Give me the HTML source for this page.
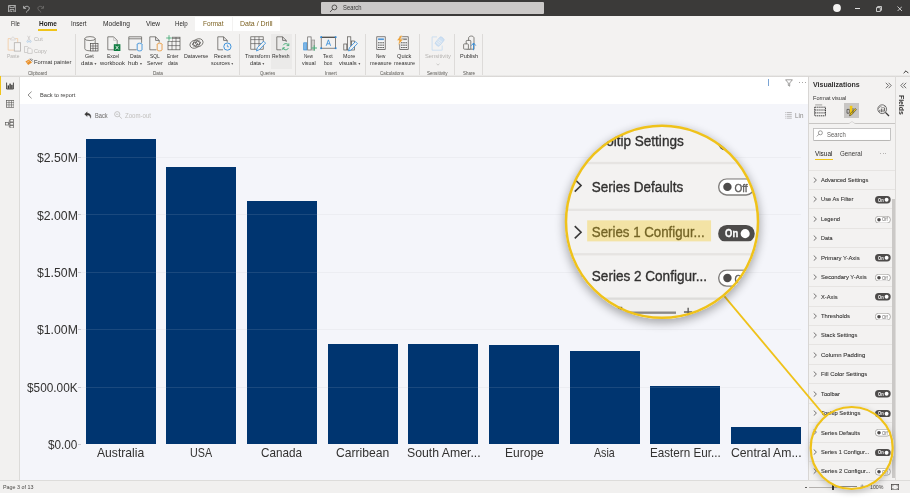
<!DOCTYPE html>
<html><head><meta charset="utf-8"><title>Power BI</title>
<style>
html,body{margin:0;padding:0;background:#fff;}
body{width:910px;height:502px;position:relative;overflow:hidden;font-family:"Liberation Sans", sans-serif;}
#root{position:absolute;left:0;top:0;width:910px;height:502px;overflow:hidden;will-change:transform;}
#root div,#root span,#root svg{box-sizing:border-box;}
.mag span{-webkit-text-stroke-width:0.15px !important;}
</style></head><body><div id="root">
<div style="position:absolute;left:0px;top:0px;width:910px;height:16px;background:#3b3a39;"></div>
<div style="position:absolute;left:0px;top:16px;width:910px;height:60px;background:#f3f2f1;"></div>
<div style="position:absolute;left:0px;top:74.6px;width:910px;height:2.3px;background:linear-gradient(#f2f1f0,#e6e5e3 35%,#d9d7d5 70%,#e2e1df);"></div>
<div style="position:absolute;left:0px;top:76.7px;width:20px;height:403.8px;background:#f2f1f0;"></div>
<div style="position:absolute;left:19.3px;top:76.0px;width:0.8px;height:404.5px;background:#dcdbd9;"></div>
<div style="position:absolute;left:20px;top:76.8px;width:788.5px;height:27.2px;background:#ffffff;"></div>
<div style="position:absolute;left:20px;top:104px;width:788.5px;height:376.5px;background:#f4f5fa;"></div>
<div style="position:absolute;left:0px;top:480.5px;width:910px;height:12.5px;background:#f1f0ef;"></div>
<div style="position:absolute;left:0px;top:480px;width:910px;height:0.8px;background:#dddcda;"></div>
<div style="position:absolute;left:321px;top:2px;width:222.6px;height:11.7px;background:#cbc9c8;border-radius:1px;"></div>
<span style="position:absolute;left:342.60px;top:4px;font-size:7.0px;line-height:8.4px;font-weight:400;color:#3b3a39;white-space:pre;transform:scaleX(0.8348);transform-origin:0 0;">Search</span>
<svg style="position:absolute;left:329px;top:4px;" width="9" height="9" viewBox="0 0 9 9" fill="none"><circle cx="5.4" cy="3.4" r="2.4" stroke="#3b3a39" stroke-width="0.8"/><path d="M3.7 5.2 L1 8" stroke="#3b3a39" stroke-width="0.8"/></svg>
<svg style="position:absolute;left:7.8px;top:4.5px;" width="8.2" height="7.8" viewBox="0 0 8.2 7.8" fill="none"><path d="M0.5 0.5 H7.7 V7.3 H0.5 Z" stroke="#c4c4c4" stroke-width="0.8"/><path d="M1.9 0.7 V2.6 H6.3 V0.7" stroke="#c4c4c4" stroke-width="0.8"/><path d="M2 7.2 V4.6 H6 V7.2 M3.6 5.8 V7.2" stroke="#c4c4c4" stroke-width="0.8"/></svg>
<svg style="position:absolute;left:22.5px;top:4.6px;" width="7.2" height="8" viewBox="0 0 7.2 8" fill="none"><path d="M0.7 0.9 V3.3 H3.1" stroke="#d4d4d4" stroke-width="0.8"/><path d="M0.9 3.1 C2.2 0.9 5.4 0.7 6.2 2.6 C6.8 4.2 5 5.6 3 7.5" stroke="#d4d4d4" stroke-width="0.8"/></svg>
<svg style="position:absolute;left:37px;top:4.6px;" width="7.2" height="8" viewBox="0 0 7.2 8" fill="none"><path d="M6.5 0.9 V3.3 H4.1" stroke="#737271" stroke-width="0.8"/><path d="M6.3 3.1 C5 0.9 1.8 0.7 1 2.6 C0.4 4.2 2.2 5.6 4.2 7.5" stroke="#737271" stroke-width="0.8"/></svg>
<svg style="position:absolute;left:832.6px;top:4.3px;" width="8" height="8" viewBox="0 0 8 8" fill="none"><circle cx="4" cy="4" r="3.9" fill="#f3f2f1"/></svg>
<div style="position:absolute;left:855.4px;top:8.3px;width:5px;height:0.7px;background:#e0e0e0;"></div>
<svg style="position:absolute;left:875.8px;top:5.5px;" width="6" height="6" viewBox="0 0 6 6" fill="none"><path d="M0.5 1.6 H4.3 V5.5 H0.5 Z M1.6 1.6 V0.5 H5.5 V4.3 H4.3" stroke="#e8e8e8" stroke-width="0.8"/></svg>
<svg style="position:absolute;left:896.9px;top:5.7px;" width="5.6" height="5.6" viewBox="0 0 5.6 5.6" fill="none"><path d="M0.5 0.5 L5.1 5.1 M5.1 0.5 L0.5 5.1" stroke="#ececec" stroke-width="0.8"/></svg>
<div style="position:absolute;left:195px;top:16.6px;width:37px;height:14.2px;background:#ffffff;"></div>
<div style="position:absolute;left:233px;top:16.6px;width:47px;height:14.2px;background:#ffffff;"></div>
<span style="position:absolute;left:10.90px;top:20px;font-size:6.5px;line-height:7.8px;font-weight:400;color:#2b2a29;white-space:pre;transform:scaleX(0.8455);transform-origin:0 0;">File</span>
<span style="position:absolute;left:38.60px;top:20px;font-size:6.5px;line-height:7.8px;font-weight:700;color:#252423;white-space:pre;transform:scaleX(0.9889);transform-origin:0 0;">Home</span>
<div style="position:absolute;left:38.4px;top:29.0px;width:18.2px;height:1.7px;background:#f0c419;"></div>
<span style="position:absolute;left:71.20px;top:20px;font-size:6.5px;line-height:7.8px;font-weight:400;color:#2b2a29;white-space:pre;transform:scaleX(0.9529);transform-origin:0 0;">Insert</span>
<span style="position:absolute;left:102.90px;top:20px;font-size:6.5px;line-height:7.8px;font-weight:400;color:#2b2a29;white-space:pre;transform:scaleX(1.0222);transform-origin:0 0;">Modeling</span>
<span style="position:absolute;left:145.60px;top:20px;font-size:6.5px;line-height:7.8px;font-weight:400;color:#2b2a29;white-space:pre;transform:scaleX(1.0071);transform-origin:0 0;">View</span>
<span style="position:absolute;left:174.60px;top:20px;font-size:6.5px;line-height:7.8px;font-weight:400;color:#2b2a29;white-space:pre;transform:scaleX(0.9429);transform-origin:0 0;">Help</span>
<span style="position:absolute;left:202.90px;top:20px;font-size:6.5px;line-height:7.8px;font-weight:400;color:#7a5f1e;white-space:pre;transform:scaleX(0.9952);transform-origin:0 0;">Format</span>
<span style="position:absolute;left:239.80px;top:20px;font-size:6.5px;line-height:7.8px;font-weight:400;color:#7a5f1e;white-space:pre;transform:scaleX(1.0710);transform-origin:0 0;">Data / Drill</span>
<span style="position:absolute;left:6.90px;top:53px;font-size:6.0px;line-height:7.2px;font-weight:400;color:#b5b3b1;white-space:pre;transform:scaleX(0.8063);transform-origin:0 0;">Paste</span>
<span style="position:absolute;left:33.80px;top:36px;font-size:6.0px;line-height:7.2px;font-weight:400;color:#b5b3b1;white-space:pre;transform:scaleX(0.9300);transform-origin:0 0;">Cut</span>
<span style="position:absolute;left:33.80px;top:48px;font-size:6.0px;line-height:7.2px;font-weight:400;color:#b5b3b1;white-space:pre;transform:scaleX(0.9143);transform-origin:0 0;">Copy</span>
<span style="position:absolute;left:33.80px;top:59px;font-size:6.0px;line-height:7.2px;font-weight:400;color:#323130;white-space:pre;transform:scaleX(0.9590);transform-origin:0 0;">Format painter</span>
<span style="position:absolute;left:28.00px;top:70px;font-size:5.2px;line-height:6.24px;font-weight:400;color:#55534f;white-space:pre;transform:scaleX(0.8522);transform-origin:0 0;">Clipboard</span>
<div style="position:absolute;left:75.45px;top:34px;width:0.9px;height:40.5px;background:#dddbd9;"></div>
<svg style="position:absolute;left:7px;top:35.5px;" width="15" height="17" viewBox="0 0 15 17" fill="none"><path d="M3.5 2.6 H1.15 V14.1 H7.3" stroke="#f2c9a0" stroke-width="0.8"/><path d="M8.3 2.6 H10.7 V6.7" stroke="#f2c9a0" stroke-width="0.8"/><path d="M3.6 4 V2.4 H4.7 C4.7 0.5 7.1 0.5 7.1 2.4 H8.2 V4 Z" stroke="#d2d0ce" stroke-width="0.7"/><rect x="7.3" y="6.7" width="6.3" height="8.4" stroke="#b3b0ad" stroke-width="0.8" fill="#f5f4f3"/></svg>
<svg style="position:absolute;left:25.5px;top:35px;" width="7" height="9" viewBox="0 0 7 9" fill="none"><path d="M1.55 0.8 L4.2 5.6 M3.95 0.8 L1.8 5.6" stroke="#c2c0be" stroke-width="0.6"/><circle cx="1.7" cy="6.5" r="0.85" stroke="#9dc3e6" stroke-width="0.6"/><circle cx="4.3" cy="6.5" r="0.85" stroke="#9dc3e6" stroke-width="0.6"/></svg>
<svg style="position:absolute;left:24px;top:46px;" width="9" height="9" viewBox="0 0 9 9" fill="none"><path d="M3.7 6.5 H0.5 V0.4 H3.3 L4.7 1.8 V2.2" stroke="#c2c0be" stroke-width="0.7"/><path d="M3.7 2.2 H6.6 L8.2 3.8 V7.4 H3.7 Z" stroke="#c2c0be" stroke-width="0.7" fill="#f5f4f3"/></svg>
<svg style="position:absolute;left:24.5px;top:57.5px;" width="9" height="9" viewBox="0 0 9 9" fill="none"><path d="M0.4 3.6 L4.2 1.2 L7 4.5 L3.2 7.1 Z" fill="#e8912d"/><path d="M1.6 4.6 L4.6 2.6" stroke="#fbe3c4" stroke-width="0.6"/><path d="M5 0.8 L7.6 3.4 M6.2 0.6 L6.9 1.3 M7.2 1 L7.6 1.5" stroke="#3b3a39" stroke-width="0.7"/></svg>
<span style="position:absolute;left:85.00px;top:53px;font-size:6.0px;line-height:7.2px;font-weight:400;color:#323130;white-space:pre;transform:scaleX(0.9000);transform-origin:0 0;">Get</span>
<span style="position:absolute;left:81.40px;top:60px;font-size:6.0px;line-height:7.2px;font-weight:400;color:#323130;white-space:pre;transform:scaleX(1.0125);transform-origin:0 0;">data<span style="font-size:3.4px;color:#605e5c;position:relative;top:-0.4px"> &#9660;</span></span>
<span style="position:absolute;left:106.55px;top:53px;font-size:6.0px;line-height:7.2px;font-weight:400;color:#323130;white-space:pre;transform:scaleX(0.8200);transform-origin:0 0;">Excel</span>
<span style="position:absolute;left:100.05px;top:60px;font-size:6.0px;line-height:7.2px;font-weight:400;color:#323130;white-space:pre;transform:scaleX(0.9731);transform-origin:0 0;">workbook</span>
<span style="position:absolute;left:129.85px;top:53px;font-size:6.0px;line-height:7.2px;font-weight:400;color:#323130;white-space:pre;transform:scaleX(0.8538);transform-origin:0 0;">Data</span>
<span style="position:absolute;left:128.20px;top:60px;font-size:6.0px;line-height:7.2px;font-weight:400;color:#323130;white-space:pre;transform:scaleX(1.0286);transform-origin:0 0;">hub<span style="font-size:3.4px;color:#605e5c;position:relative;top:-0.4px"> &#9660;</span></span>
<span style="position:absolute;left:149.95px;top:53px;font-size:6.0px;line-height:7.2px;font-weight:400;color:#323130;white-space:pre;transform:scaleX(0.8083);transform-origin:0 0;">SQL</span>
<span style="position:absolute;left:146.75px;top:60px;font-size:6.0px;line-height:7.2px;font-weight:400;color:#323130;white-space:pre;transform:scaleX(0.8944);transform-origin:0 0;">Server</span>
<span style="position:absolute;left:167.40px;top:53px;font-size:6.0px;line-height:7.2px;font-weight:400;color:#323130;white-space:pre;transform:scaleX(0.8000);transform-origin:0 0;">Enter</span>
<span style="position:absolute;left:168.40px;top:60px;font-size:6.0px;line-height:7.2px;font-weight:400;color:#323130;white-space:pre;transform:scaleX(0.8333);transform-origin:0 0;">data</span>
<span style="position:absolute;left:183.70px;top:53px;font-size:6.0px;line-height:7.2px;font-weight:400;color:#323130;white-space:pre;transform:scaleX(0.8857);transform-origin:0 0;">Dataverse</span>
<span style="position:absolute;left:214.20px;top:53px;font-size:6.0px;line-height:7.2px;font-weight:400;color:#323130;white-space:pre;transform:scaleX(0.8842);transform-origin:0 0;">Recent</span>
<span style="position:absolute;left:211.40px;top:60px;font-size:6.0px;line-height:7.2px;font-weight:400;color:#323130;white-space:pre;transform:scaleX(0.8960);transform-origin:0 0;">sources<span style="font-size:3.4px;color:#605e5c;position:relative;top:-0.4px"> &#9660;</span></span>
<span style="position:absolute;left:153.00px;top:70px;font-size:5.2px;line-height:6.24px;font-weight:400;color:#55534f;white-space:pre;transform:scaleX(0.9000);transform-origin:0 0;">Data</span>
<div style="position:absolute;left:238.85000000000002px;top:34px;width:0.9px;height:40.5px;background:#dddbd9;"></div>
<svg style="position:absolute;left:83.5px;top:35.5px;" width="15" height="16" viewBox="0 0 15 16" fill="none"><ellipse cx="6" cy="2.6" rx="5.2" ry="2" stroke="#55534f" stroke-width="0.7"/><path d="M0.8 2.6 V12.6 C0.8 14 3 14.8 6 14.8 M11.2 2.6 V7" stroke="#55534f" stroke-width="0.7"/><rect x="6.6" y="7.6" width="7.4" height="7.4" fill="#f3f2f1" stroke="#4a4846" stroke-width="0.7"/><path d="M6.6 10 H14 M6.6 12.4 H14 M9 7.6 V15 M11.6 7.6 V15" stroke="#4a4846" stroke-width="0.6"/></svg>
<svg style="position:absolute;left:107px;top:35.5px;" width="14" height="16" viewBox="0 0 14 16" fill="none"><path d="M0.8 0.8 H6.6 L10.2 4.4 V13.8 H0.8 Z" stroke="#55534f" stroke-width="0.7"/><path d="M6.6 0.8 V4.4 H10.2" stroke="#b8b6b4" stroke-width="0.7"/><rect x="6.8" y="8.2" width="6.6" height="6.8" fill="#107c41"/><path d="M8.6 9.8 L11.6 13.4 M11.6 9.8 L8.6 13.4" stroke="#fff" stroke-width="0.8"/></svg>
<svg style="position:absolute;left:128.3px;top:35.5px;" width="15" height="16" viewBox="0 0 15 16" fill="none"><path d="M8.6 13.8 H0.8 V0.8 H13.6 V6.8" stroke="#55534f" stroke-width="0.7"/><path d="M0.8 2.8 H13.6" stroke="#55534f" stroke-width="0.7"/><ellipse cx="11.6" cy="8.2" rx="2.4" ry="1" stroke="#2b88d8" stroke-width="0.8" fill="#f3f2f1"/><path d="M9.2 8.2 V14 C9.2 15.2 14 15.2 14 14 V8.2" stroke="#2b88d8" stroke-width="0.8" fill="#f3f2f1"/></svg>
<svg style="position:absolute;left:148.6px;top:35.5px;" width="14" height="16" viewBox="0 0 14 16" fill="none"><path d="M7.4 13.8 H0.8 V0.8 H6.6 L10.2 4.4 V6.6" stroke="#55534f" stroke-width="0.7"/><path d="M6.6 0.8 V4.4 H10.2" stroke="#4a4846" stroke-width="0.7"/><ellipse cx="10.6" cy="8.2" rx="2.4" ry="1" stroke="#e8912d" stroke-width="0.8" fill="#f3f2f1"/><path d="M8.2 8.2 V14 C8.2 15.2 13 15.2 13 14 V8.2" stroke="#e8912d" stroke-width="0.8" fill="#f3f2f1"/></svg>
<svg style="position:absolute;left:165.5px;top:34.8px;" width="15" height="17" viewBox="0 0 15 17" fill="none"><rect x="2" y="2.2" width="12" height="12.6" stroke="#55534f" stroke-width="0.7"/><path d="M2 3.4 H14 M2 6.4 H14 M2 10.6 H14 M6 2.2 V14.8 M10 2.2 V14.8" stroke="#4a4846" stroke-width="0.6"/><rect x="0" y="0" width="6" height="6" fill="#f3f2f1"/><path d="M3 0.2 V5.8 M0.2 3 H5.8" stroke="#35a56c" stroke-width="0.8"/></svg>
<svg style="position:absolute;left:188.8px;top:37px;" width="15" height="13" viewBox="0 0 15 13" fill="none"><g transform="rotate(-22 7.5 6.5)"><ellipse cx="5.6" cy="6.5" rx="4.9" ry="3.9" stroke="#55534f" stroke-width="0.7"/><ellipse cx="9.4" cy="6.5" rx="4.9" ry="3.9" stroke="#55534f" stroke-width="0.7"/><ellipse cx="5.9" cy="6.5" rx="2.5" ry="1.9" stroke="#4a4846" stroke-width="0.7"/><ellipse cx="9.1" cy="6.5" rx="2.5" ry="1.9" stroke="#4a4846" stroke-width="0.7"/></g></svg>
<svg style="position:absolute;left:216.5px;top:35.5px;" width="15" height="16" viewBox="0 0 15 16" fill="none"><path d="M6 13.8 H0.8 V0.8 H6.6 L10.2 4.4 V6.4" stroke="#55534f" stroke-width="0.7"/><path d="M6.6 0.8 V4.4 H10.2" stroke="#4a4846" stroke-width="0.7"/><circle cx="10.4" cy="10.6" r="3.6" stroke="#2b88d8" stroke-width="0.9" fill="#f3f2f1"/><path d="M10.4 8.6 V10.8 H12" stroke="#2b88d8" stroke-width="0.7"/></svg>
<div style="position:absolute;left:271px;top:34px;width:21px;height:34.5px;background:#ebeae9;"></div>
<span style="position:absolute;left:244.95px;top:53px;font-size:6.0px;line-height:7.2px;font-weight:400;color:#323130;white-space:pre;transform:scaleX(0.9296);transform-origin:0 0;">Transform</span>
<span style="position:absolute;left:250.00px;top:60px;font-size:6.0px;line-height:7.2px;font-weight:400;color:#323130;white-space:pre;transform:scaleX(0.9375);transform-origin:0 0;">data<span style="font-size:3.4px;color:#605e5c;position:relative;top:-0.4px"> &#9660;</span></span>
<span style="position:absolute;left:271.85px;top:53px;font-size:6.0px;line-height:7.2px;font-weight:400;color:#323130;white-space:pre;transform:scaleX(0.8318);transform-origin:0 0;">Refresh</span>
<span style="position:absolute;left:260.10px;top:70px;font-size:5.2px;line-height:6.24px;font-weight:400;color:#55534f;white-space:pre;transform:scaleX(0.8333);transform-origin:0 0;">Queries</span>
<div style="position:absolute;left:295.25px;top:34px;width:0.9px;height:40.5px;background:#dddbd9;"></div>
<svg style="position:absolute;left:249.8px;top:35.5px;" width="16" height="16" viewBox="0 0 16 16" fill="none"><rect x="0.8" y="0.8" width="12.4" height="12.4" stroke="#55534f" stroke-width="0.7"/><path d="M0.8 3.6 H13.2 M0.8 7.6 H13.2 M4.8 0.8 V13.2 M9 0.8 V13.2" stroke="#4a4846" stroke-width="0.6"/><path d="M6.5 15 L7.4 11.6 L13.6 5.2 L15.6 7.2 L9.4 13.6 Z" fill="#f3f2f1" stroke="#2b88d8" stroke-width="0.8"/></svg>
<svg style="position:absolute;left:275.8px;top:35.5px;" width="14" height="16" viewBox="0 0 14 16" fill="none"><path d="M5.4 13.8 H0.8 V0.8 H6.6 L10.2 4.4 V6" stroke="#55534f" stroke-width="0.7"/><path d="M6.6 0.8 V4.4 H10.2" stroke="#4a4846" stroke-width="0.7"/><path d="M12.6 9.4 C11.6 7.2 8.4 7 7.2 9.2 M7 12 C8 14.2 11.2 14.4 12.4 12.2" stroke="#35a56c" stroke-width="0.9"/><path d="M12.8 7.4 V9.6 H10.6 M6.8 14 V11.8 H9" stroke="#35a56c" stroke-width="0.8"/></svg>
<span style="position:absolute;left:304.40px;top:53px;font-size:6.0px;line-height:7.2px;font-weight:400;color:#323130;white-space:pre;transform:scaleX(0.7385);transform-origin:0 0;">New</span>
<span style="position:absolute;left:302.05px;top:60px;font-size:6.0px;line-height:7.2px;font-weight:400;color:#323130;white-space:pre;transform:scaleX(0.8938);transform-origin:0 0;">visual</span>
<span style="position:absolute;left:323.20px;top:53px;font-size:6.0px;line-height:7.2px;font-weight:400;color:#323130;white-space:pre;transform:scaleX(0.8727);transform-origin:0 0;">Text</span>
<span style="position:absolute;left:323.70px;top:60px;font-size:6.0px;line-height:7.2px;font-weight:400;color:#323130;white-space:pre;transform:scaleX(0.8600);transform-origin:0 0;">box</span>
<span style="position:absolute;left:343.25px;top:53px;font-size:6.0px;line-height:7.2px;font-weight:400;color:#323130;white-space:pre;transform:scaleX(0.8929);transform-origin:0 0;">More</span>
<span style="position:absolute;left:338.85px;top:60px;font-size:6.0px;line-height:7.2px;font-weight:400;color:#323130;white-space:pre;transform:scaleX(0.9682);transform-origin:0 0;">visuals<span style="font-size:3.4px;color:#605e5c;position:relative;top:-0.4px"> &#9660;</span></span>
<span style="position:absolute;left:324.50px;top:70px;font-size:5.2px;line-height:6.24px;font-weight:400;color:#55534f;white-space:pre;transform:scaleX(0.9077);transform-origin:0 0;">Insert</span>
<div style="position:absolute;left:364.85px;top:34px;width:0.9px;height:40.5px;background:#dddbd9;"></div>
<svg style="position:absolute;left:302.5px;top:35.5px;" width="15" height="16" viewBox="0 0 15 16" fill="none"><rect x="0.7" y="6.8" width="3.2" height="7.2" fill="#7db6e6" stroke="#2b88d8" stroke-width="0.6"/><rect x="4.7" y="0.9" width="3.4" height="13.1" stroke="#605e5c" stroke-width="0.7" fill="#f8f8f8"/><rect x="8.7" y="4" width="3" height="10" stroke="#8a8886" stroke-width="0.6" fill="#d2d0ce"/><path d="M11.2 9.2 V14.8 M8.4 12 H14" stroke="#4bb07a" stroke-width="1"/></svg>
<svg style="position:absolute;left:320px;top:36.2px;" width="17" height="14" viewBox="0 0 17 14" fill="none"><rect x="1.2" y="1.2" width="14.4" height="11" stroke="#55534f" stroke-width="0.7"/><path d="M1.2 1.3 H15.6" stroke="#4a4846" stroke-width="1.1"/><rect x="0.3" y="0.3" width="1.7" height="1.7" fill="#2b88d8"/><rect x="14.8" y="0.3" width="1.7" height="1.7" fill="#2b88d8"/><rect x="0.3" y="11.4" width="1.7" height="1.7" fill="#2b88d8"/><rect x="14.8" y="11.4" width="1.7" height="1.7" fill="#2b88d8"/><path d="M6.2 9.8 L8.4 3.8 L10.6 9.8 M7 7.8 H9.8" stroke="#2b88d8" stroke-width="0.8"/></svg>
<svg style="position:absolute;left:342.5px;top:35.5px;" width="16" height="16" viewBox="0 0 16 16" fill="none"><rect x="0.8" y="8" width="3" height="6" stroke="#55534f" stroke-width="0.7"/><rect x="4.6" y="0.8" width="3.2" height="13.2" stroke="#55534f" stroke-width="0.7"/><rect x="8.6" y="5" width="3" height="9" stroke="#55534f" stroke-width="0.7"/><path d="M5.6 15 L6.4 11.8 L12.4 5.6 L14.4 7.6 L8.4 13.8 Z" fill="#f3f2f1" stroke="#2b88d8" stroke-width="0.8"/></svg>
<span style="position:absolute;left:376.00px;top:53px;font-size:6.0px;line-height:7.2px;font-weight:400;color:#323130;white-space:pre;transform:scaleX(0.7692);transform-origin:0 0;">New</span>
<span style="position:absolute;left:369.95px;top:60px;font-size:6.0px;line-height:7.2px;font-weight:400;color:#323130;white-space:pre;transform:scaleX(0.9208);transform-origin:0 0;">measure</span>
<span style="position:absolute;left:397.20px;top:53px;font-size:6.0px;line-height:7.2px;font-weight:400;color:#323130;white-space:pre;transform:scaleX(0.9375);transform-origin:0 0;">Quick</span>
<span style="position:absolute;left:393.90px;top:60px;font-size:6.0px;line-height:7.2px;font-weight:400;color:#323130;white-space:pre;transform:scaleX(0.9000);transform-origin:0 0;">measure</span>
<span style="position:absolute;left:380.40px;top:70px;font-size:5.2px;line-height:6.24px;font-weight:400;color:#55534f;white-space:pre;transform:scaleX(0.8483);transform-origin:0 0;">Calculations</span>
<div style="position:absolute;left:419.35px;top:34px;width:0.9px;height:40.5px;background:#dddbd9;"></div>
<svg style="position:absolute;left:375.8px;top:35.8px;" width="11" height="15" viewBox="0 0 11 15" fill="none"><rect x="0.8" y="0.8" width="8.4" height="12.6" stroke="#4a4846" stroke-width="0.7" fill="#f8f8f8"/><rect x="2.1" y="2.4" width="5.8" height="1.7" fill="#4f94d4"/><rect x="2.2" y="6.2" width="1.3" height="1.1" fill="#3b3a39"/><rect x="4.35" y="6.2" width="1.3" height="1.1" fill="#3b3a39"/><rect x="6.5" y="6.2" width="1.3" height="1.1" fill="#3b3a39"/><rect x="2.2" y="8.6" width="1.3" height="1.1" fill="#3b3a39"/><rect x="4.35" y="8.6" width="1.3" height="1.1" fill="#3b3a39"/><rect x="6.5" y="8.6" width="1.3" height="1.1" fill="#3b3a39"/><rect x="2.2" y="11.0" width="1.3" height="1.1" fill="#3b3a39"/><rect x="4.35" y="11.0" width="1.3" height="1.1" fill="#3b3a39"/><rect x="6.5" y="11.0" width="1.3" height="1.1" fill="#3b3a39"/></svg>
<svg style="position:absolute;left:398.8px;top:35.8px;" width="11" height="15" viewBox="0 0 11 15" fill="none"><rect x="0.8" y="0.8" width="8.4" height="12.6" stroke="#4a4846" stroke-width="0.7" fill="#f8f8f8"/><rect x="2.1" y="2.4" width="5.8" height="1.7" fill="#8a8886"/><rect x="2.2" y="6.2" width="1.3" height="1.1" fill="#3b3a39"/><rect x="4.35" y="6.2" width="1.3" height="1.1" fill="#3b3a39"/><rect x="6.5" y="6.2" width="1.3" height="1.1" fill="#3b3a39"/><rect x="2.2" y="8.6" width="1.3" height="1.1" fill="#3b3a39"/><rect x="4.35" y="8.6" width="1.3" height="1.1" fill="#3b3a39"/><rect x="6.5" y="8.6" width="1.3" height="1.1" fill="#3b3a39"/><rect x="2.2" y="11.0" width="1.3" height="1.1" fill="#3b3a39"/><rect x="4.35" y="11.0" width="1.3" height="1.1" fill="#3b3a39"/><rect x="6.5" y="11.0" width="1.3" height="1.1" fill="#3b3a39"/></svg>
<svg style="position:absolute;left:395.6px;top:34.6px;" width="8" height="11" viewBox="0 0 8 11" fill="none"><path d="M4.6 0.4 L0.8 5.6 H3.2 L2 10.4 L7.2 4.2 H4.6 L6.4 0.4 Z" fill="#f0a030" stroke="#f3f2f1" stroke-width="0.5"/></svg>
<span style="position:absolute;left:424.75px;top:53px;font-size:6.0px;line-height:7.2px;font-weight:400;color:#b5b3b1;white-space:pre;transform:scaleX(0.9593);transform-origin:0 0;">Sensitivity</span>
<span style="position:absolute;left:426.65px;top:70px;font-size:5.2px;line-height:6.24px;font-weight:400;color:#55534f;white-space:pre;transform:scaleX(0.8792);transform-origin:0 0;">Sensitivity</span>
<svg style="position:absolute;left:435.8px;top:62.6px;" width="4" height="3" viewBox="0 0 4 3" fill="none"><path d="M0.6 0.6 L2 2.2 L3.4 0.6" stroke="#b5b3b1" stroke-width="0.6"/></svg>
<svg style="position:absolute;left:431px;top:35.5px;" width="15" height="16" viewBox="0 0 15 16" fill="none"><path d="M6 0.9 H1.1 V14.2 H11.2 V9.6" stroke="#c3daf0" stroke-width="0.8"/><g transform="rotate(40 8.6 5.6)"><rect x="6" y="0.8" width="5.2" height="9.4" rx="1.6" fill="#cfe1f3" stroke="#b4d0eb" stroke-width="0.6"/><path d="M6.4 4.6 H10.8 M6.4 6.4 H10.8 M6.4 8.2 H10.8" stroke="#f3f2f1" stroke-width="0.7"/></g></svg>
<div style="position:absolute;left:454.05px;top:34px;width:0.9px;height:40.5px;background:#dddbd9;"></div>
<span style="position:absolute;left:460.05px;top:53px;font-size:6.0px;line-height:7.2px;font-weight:400;color:#323130;white-space:pre;transform:scaleX(0.9250);transform-origin:0 0;">Publish</span>
<span style="position:absolute;left:463.00px;top:70px;font-size:5.2px;line-height:6.24px;font-weight:400;color:#55534f;white-space:pre;transform:scaleX(0.8571);transform-origin:0 0;">Share</span>
<div style="position:absolute;left:481.85px;top:34px;width:0.9px;height:40.5px;background:#dddbd9;"></div>
<svg style="position:absolute;left:462.8px;top:35.2px;" width="15" height="16" viewBox="0 0 15 16" fill="none"><path d="M5.6 14.2 V3 C5.6 0.4 11 0.4 11 3 V14.2 Z" stroke="#55534f" stroke-width="0.7" fill="#f3f2f1"/><rect x="3.2" y="5.4" width="4.6" height="8.8" rx="0.8" stroke="#55534f" stroke-width="0.7" fill="#f3f2f1"/><rect x="0.6" y="8.9" width="4.8" height="5.3" rx="0.8" stroke="#55534f" stroke-width="0.7" fill="#f3f2f1"/><path d="M10.6 15.2 V8.4 M8.4 10.6 L10.6 8 L12.8 10.6" stroke="#2b88d8" stroke-width="0.9"/></svg>
<svg style="position:absolute;left:903px;top:69.5px;" width="6" height="4" viewBox="0 0 6 4" fill="none"><path d="M0.6 3.2 L3 0.8 L5.4 3.2" stroke="#3b3a39" stroke-width="1"/></svg>
<div style="position:absolute;left:0px;top:75.7px;width:1.25px;height:18.9px;background:#f0c419;"></div>
<svg style="position:absolute;left:6.2px;top:82px;" width="8" height="8" viewBox="0 0 8 8" fill="none"><path d="M0.6 0.6 V7 H7.4 V0.6" stroke="#3b3a39" stroke-width="0.9"/><rect x="1.6" y="3.4" width="1.4" height="3.4" fill="#3b3a39"/><rect x="3.4" y="1.6" width="1.4" height="5.2" fill="#3b3a39"/><rect x="5.2" y="2.8" width="1.4" height="4" fill="#3b3a39"/></svg>
<svg style="position:absolute;left:5.6px;top:100.2px;" width="8.5" height="8" viewBox="0 0 8.5 8" fill="none"><rect x="0.5" y="0.5" width="7.5" height="6.8" stroke="#605e5c" stroke-width="0.7"/><path d="M0.5 2.6 H8 M0.5 4.9 H8 M3 0.5 V7.3 M5.5 0.5 V7.3" stroke="#605e5c" stroke-width="0.6"/></svg>
<svg style="position:absolute;left:5.2px;top:118.6px;" width="9" height="9.5" viewBox="0 0 9 9.5" fill="none"><rect x="0.5" y="3.4" width="3" height="2.6" stroke="#605e5c" stroke-width="0.7"/><rect x="5" y="0.5" width="3.4" height="2.4" stroke="#605e5c" stroke-width="0.7"/><rect x="5" y="3.6" width="3.4" height="2.4" stroke="#605e5c" stroke-width="0.7"/><rect x="5" y="6.6" width="3.4" height="2.4" stroke="#605e5c" stroke-width="0.7"/><path d="M3.5 4.7 H5 M4.2 1.7 H5 M4.2 7.8 H5 M4.2 1.7 V7.8" stroke="#605e5c" stroke-width="0.6"/></svg>
<svg style="position:absolute;left:26.9px;top:90.8px;" width="5.5" height="8" viewBox="0 0 5.5 8" fill="none"><path d="M4.6 0.6 L1 4 L4.6 7.4" stroke="#605e5c" stroke-width="0.7"/></svg>
<span style="position:absolute;left:39.60px;top:92px;font-size:6.0px;line-height:7.2px;font-weight:400;color:#3b3a39;white-space:pre;transform:scaleX(0.9447);transform-origin:0 0;">Back to report</span>
<div style="position:absolute;left:767.9px;top:78.6px;width:0.6px;height:1.0px;background:#7ba4d4;"></div>
<div style="position:absolute;left:767.9px;top:80.3px;width:0.6px;height:5.5px;background:#7ba4d4;"></div>
<svg style="position:absolute;left:785px;top:78.5px;" width="8" height="8" viewBox="0 0 8 8" fill="none"><path d="M0.6 0.8 H7.4 L4.7 4 V7.2 L3.3 6.4 V4 Z" stroke="#605e5c" stroke-width="0.6"/></svg>
<div style="position:absolute;left:799.4px;top:81.6px;width:1.1px;height:1.1px;background:#8a8886;border-radius:50%"></div>
<div style="position:absolute;left:802.2px;top:81.6px;width:1.1px;height:1.1px;background:#8a8886;border-radius:50%"></div>
<div style="position:absolute;left:805.0px;top:81.6px;width:1.1px;height:1.1px;background:#8a8886;border-radius:50%"></div>
<svg style="position:absolute;left:84px;top:111.4px;" width="8" height="8" viewBox="0 0 7.5 7.5" fill="none"><path d="M3 0.8 L0.6 3 L3 5.2 V3.8 C4.6 3.6 5.8 4.6 6.2 6.8 C7 3.8 5.6 2.2 3 2.2 Z" fill="#3b3a39" stroke="#3b3a39" stroke-width="0.3"/></svg>
<span style="position:absolute;left:94.60px;top:112px;font-size:6.9px;line-height:8.28px;font-weight:400;color:#6b6967;white-space:pre;transform:scaleX(0.8250);transform-origin:0 0;">Back</span>
<svg style="position:absolute;left:114.2px;top:111.4px;" width="8.5" height="8" viewBox="0 0 8.5 8" fill="none"><circle cx="3.2" cy="3.2" r="2.6" stroke="#b5b3b1" stroke-width="0.7"/><path d="M5.2 5.2 L7.8 7.6 M2 3.2 H4.4" stroke="#b5b3b1" stroke-width="0.7"/></svg>
<span style="position:absolute;left:125.30px;top:112px;font-size:6.9px;line-height:8.28px;font-weight:400;color:#c2c0be;white-space:pre;transform:scaleX(0.8800);transform-origin:0 0;">Zoom-out</span>
<svg style="position:absolute;left:785px;top:111.8px;" width="7" height="7.6" viewBox="0 0 7 7.6" fill="none"><path d="M1.6 0.6 H6.8 M1.6 2.7 H6.8 M1.6 4.8 H6.8 M1.6 6.9 H6.8" stroke="#8a8886" stroke-width="0.6"/><path d="M0.3 0.6 H1 M0.3 2.7 H1 M0.3 4.8 H1 M0.3 6.9 H1" stroke="#8a8886" stroke-width="0.6"/></svg>
<span style="position:absolute;left:794.80px;top:112px;font-size:6.9px;line-height:8.28px;font-weight:400;color:#8a8886;white-space:pre;transform:scaleX(0.9111);transform-origin:0 0;">Lin</span>
<div style="position:absolute;left:80px;top:157.0px;width:721px;height:0.6px;background:#eaebf1;"></div>
<div style="position:absolute;left:80px;top:214.39999999999998px;width:721px;height:0.6px;background:#eaebf1;"></div>
<div style="position:absolute;left:80px;top:271.8px;width:721px;height:0.6px;background:#eaebf1;"></div>
<div style="position:absolute;left:80px;top:329.09999999999997px;width:721px;height:0.6px;background:#eaebf1;"></div>
<div style="position:absolute;left:80px;top:386.5px;width:721px;height:0.6px;background:#eaebf1;"></div>
<div style="position:absolute;left:85.8px;top:138.8px;width:70px;height:305.2px;background:#003570;"></div>
<div style="position:absolute;left:166.4px;top:166.7px;width:70px;height:277.3px;background:#003570;"></div>
<div style="position:absolute;left:247.1px;top:201.2px;width:70px;height:242.8px;background:#003570;"></div>
<div style="position:absolute;left:327.6px;top:343.7px;width:70px;height:100.30000000000001px;background:#003570;"></div>
<div style="position:absolute;left:408.3px;top:343.7px;width:70px;height:100.30000000000001px;background:#003570;"></div>
<div style="position:absolute;left:489.1px;top:345.3px;width:70px;height:98.69999999999999px;background:#003570;"></div>
<div style="position:absolute;left:569.9px;top:350.7px;width:70px;height:93.30000000000001px;background:#003570;"></div>
<div style="position:absolute;left:650.2px;top:386.2px;width:70px;height:57.80000000000001px;background:#003570;"></div>
<div style="position:absolute;left:730.9px;top:426.6px;width:70px;height:17.399999999999977px;background:#003570;"></div>
<div style="position:absolute;left:80px;top:157.0px;width:721px;height:0.6px;background:rgba(255,255,255,0.10);"></div>
<div style="position:absolute;left:80px;top:214.39999999999998px;width:721px;height:0.6px;background:rgba(255,255,255,0.10);"></div>
<div style="position:absolute;left:80px;top:271.8px;width:721px;height:0.6px;background:rgba(255,255,255,0.10);"></div>
<div style="position:absolute;left:80px;top:329.09999999999997px;width:721px;height:0.6px;background:rgba(255,255,255,0.10);"></div>
<div style="position:absolute;left:80px;top:386.5px;width:721px;height:0.6px;background:rgba(255,255,255,0.10);"></div>
<span style="position:absolute;left:36.90px;top:151px;font-size:12.4px;line-height:14.88px;font-weight:400;color:#323130;white-space:pre;transform:scaleX(0.9878);transform-origin:0 0;">$2.50M</span>
<div style="position:absolute;left:78px;top:157.0px;width:2.5px;height:0.6px;background:#c8c8d0;"></div>
<span style="position:absolute;left:36.90px;top:209px;font-size:12.4px;line-height:14.88px;font-weight:400;color:#323130;white-space:pre;transform:scaleX(0.9878);transform-origin:0 0;">$2.00M</span>
<div style="position:absolute;left:78px;top:214.39999999999998px;width:2.5px;height:0.6px;background:#c8c8d0;"></div>
<span style="position:absolute;left:36.90px;top:266px;font-size:12.4px;line-height:14.88px;font-weight:400;color:#323130;white-space:pre;transform:scaleX(0.9878);transform-origin:0 0;">$1.50M</span>
<div style="position:absolute;left:78px;top:271.8px;width:2.5px;height:0.6px;background:#c8c8d0;"></div>
<span style="position:absolute;left:36.90px;top:323px;font-size:12.4px;line-height:14.88px;font-weight:400;color:#323130;white-space:pre;transform:scaleX(0.9878);transform-origin:0 0;">$1.00M</span>
<div style="position:absolute;left:78px;top:329.09999999999997px;width:2.5px;height:0.6px;background:#c8c8d0;"></div>
<span style="position:absolute;left:26.80px;top:381px;font-size:12.4px;line-height:14.88px;font-weight:400;color:#323130;white-space:pre;transform:scaleX(0.9547);transform-origin:0 0;">$500.00K</span>
<div style="position:absolute;left:78px;top:386.5px;width:2.5px;height:0.6px;background:#c8c8d0;"></div>
<span style="position:absolute;left:48.00px;top:438px;font-size:12.4px;line-height:14.88px;font-weight:400;color:#323130;white-space:pre;transform:scaleX(0.9484);transform-origin:0 0;">$0.00</span>
<div style="position:absolute;left:78px;top:444.0px;width:2.5px;height:0.6px;background:#c8c8d0;"></div>
<span style="position:absolute;left:97.00px;top:446px;font-size:12.4px;line-height:14.88px;font-weight:400;color:#323130;white-space:pre;transform:scaleX(0.9796);transform-origin:0 0;">Australia</span>
<span style="position:absolute;left:190.15px;top:446px;font-size:12.4px;line-height:14.88px;font-weight:400;color:#323130;white-space:pre;transform:scaleX(0.8654);transform-origin:0 0;">USA</span>
<span style="position:absolute;left:261.25px;top:446px;font-size:12.4px;line-height:14.88px;font-weight:400;color:#323130;white-space:pre;transform:scaleX(0.9432);transform-origin:0 0;">Canada</span>
<span style="position:absolute;left:336.20px;top:446px;font-size:12.4px;line-height:14.88px;font-weight:400;color:#323130;white-space:pre;transform:scaleX(0.9782);transform-origin:0 0;">Carribean</span>
<span style="position:absolute;left:407.15px;top:446px;font-size:12.4px;line-height:14.88px;font-weight:400;color:#323130;white-space:pre;transform:scaleX(0.9905);transform-origin:0 0;">South Amer...</span>
<span style="position:absolute;left:504.70px;top:446px;font-size:12.4px;line-height:14.88px;font-weight:400;color:#323130;white-space:pre;transform:scaleX(0.9700);transform-origin:0 0;">Europe</span>
<span style="position:absolute;left:593.85px;top:446px;font-size:12.4px;line-height:14.88px;font-weight:400;color:#323130;white-space:pre;transform:scaleX(0.8600);transform-origin:0 0;">Asia</span>
<span style="position:absolute;left:650.30px;top:446px;font-size:12.4px;line-height:14.88px;font-weight:400;color:#323130;white-space:pre;transform:scaleX(0.9413);transform-origin:0 0;">Eastern Eur...</span>
<span style="position:absolute;left:730.50px;top:446px;font-size:12.4px;line-height:14.88px;font-weight:400;color:#323130;white-space:pre;transform:scaleX(0.9859);transform-origin:0 0;">Central Am...</span>
<span style="position:absolute;left:2.60px;top:484px;font-size:5.3px;line-height:6.36px;font-weight:400;color:#4a4846;white-space:pre;transform:scaleX(1.0133);transform-origin:0 0;">Page 3 of 13</span>
<div style="position:absolute;left:804.8px;top:486.6px;width:1.8px;height:0.6px;background:#605e5c;"></div>
<div style="position:absolute;left:809px;top:486.6px;width:48px;height:0.6px;background:#b3b0ad;"></div>
<div style="position:absolute;left:832.3px;top:484.2px;width:1.4px;height:5.4px;background:#3b3a39;"></div>
<svg style="position:absolute;left:859.5px;top:484.5px;" width="4.5" height="4.5" viewBox="0 0 4.5 4.5" fill="none"><path d="M2.2 0.4 V4 M0.4 2.2 H4" stroke="#605e5c" stroke-width="0.6"/></svg>
<span style="position:absolute;left:870.20px;top:484px;font-size:5.9px;line-height:7.08px;font-weight:400;color:#4a4846;white-space:pre;transform:scaleX(0.8933);transform-origin:0 0;">100%</span>
<svg style="position:absolute;left:890.8px;top:483.6px;" width="8.2" height="6.4" viewBox="0 0 8.2 6.4" fill="none"><rect x="0.5" y="0.5" width="7.2" height="5.4" stroke="#4a4846" stroke-width="0.8"/><path d="M1.6 2.4 V1.6 H2.6 M5.6 1.6 H6.6 V2.4 M6.6 4 V4.8 H5.6 M2.6 4.8 H1.6 V4" stroke="#4a4846" stroke-width="0.5"/></svg>
<div style="position:absolute;left:808.5px;top:76.8px;width:101.5px;height:403.7px;background:#f3f2f1;"></div>
<div style="position:absolute;left:808.3px;top:76.3px;width:0.7px;height:404.2px;background:#d8d6d4;"></div>
<div style="position:absolute;left:894.6px;top:76.3px;width:0.7px;height:404.2px;background:#dddbd9;"></div>
<span style="position:absolute;left:813.00px;top:80px;font-size:7.7px;line-height:9.24px;font-weight:700;color:#323130;white-space:pre;transform:scaleX(0.9137);transform-origin:0 0;">Visualizations</span>
<svg style="position:absolute;left:884.5px;top:81.5px;" width="7" height="7" viewBox="0 0 7 7" fill="none"><path d="M0.8 0.8 L3.4 3.5 L0.8 6.2 M3.6 0.8 L6.2 3.5 L3.6 6.2" stroke="#3b3a39" stroke-width="0.7"/></svg>
<svg style="position:absolute;left:899.5px;top:81.5px;" width="7" height="7" viewBox="0 0 7 7" fill="none"><path d="M3.4 0.8 L0.8 3.5 L3.4 6.2 M6.2 0.8 L3.6 3.5 L6.2 6.2" stroke="#3b3a39" stroke-width="0.7"/></svg>
<span style="position:absolute;left:906.2px;top:94.8px;font-size:7.6px;line-height:9px;font-weight:700;color:#323130;white-space:pre;transform-origin:0 0;transform:rotate(90deg) scaleX(0.9);">Fields</span>
<span style="position:absolute;left:813.00px;top:94px;font-size:6.2px;line-height:7.44px;font-weight:400;color:#323130;white-space:pre;transform:scaleX(0.8947);transform-origin:0 0;">Format visual</span>
<svg style="position:absolute;left:814px;top:104px;" width="12.5" height="13" viewBox="0 0 12.5 13" fill="none"><path d="M1.2 0.9 H8.2" stroke="#a8a6a4" stroke-width="1.1"/><rect x="0.7" y="3.2" width="10.8" height="8.6" stroke="#252423" stroke-width="0.85" stroke-dasharray="1.3 0.6"/><path d="M0.7 6 H11.5 M0.7 8.9 H11.5" stroke="#252423" stroke-width="0.85" stroke-dasharray="1.3 0.6"/></svg>
<div style="position:absolute;left:844px;top:103.2px;width:15px;height:14.6px;background:#c8c6c4;"></div>
<svg style="position:absolute;left:846.4px;top:104.6px;" width="11" height="12" viewBox="0 0 11 12" fill="none"><path d="M1 4.4 H3.4 V8.2 H1 Z" stroke="#3b3a39" stroke-width="0.7"/><rect x="3.8" y="0.8" width="2.6" height="8.4" fill="#f2c811"/><path d="M9.2 3.4 L10.4 4.6 L5.2 10.2 L3.4 10.8 L4 9 Z" fill="#f2c811" stroke="#3b3a39" stroke-width="0.6"/><path d="M7 3 V8.2" stroke="#3b3a39" stroke-width="0.6"/></svg>
<svg style="position:absolute;left:877px;top:104px;" width="13" height="13" viewBox="0 0 13 13" fill="none"><circle cx="5.2" cy="5.2" r="4.4" stroke="#3b3a39" stroke-width="0.7"/><path d="M8.4 8.4 L12 12" stroke="#3b3a39" stroke-width="1.3"/><path d="M2.8 5.8 V7.8 M4.4 4.6 V8.2 M6 5.4 V8.2 M7.6 4 V7.4" stroke="#3b3a39" stroke-width="0.8"/><path d="M1.2 4.6 L3.6 2.6 L6 4 L8.6 2.2" stroke="#3b3a39" stroke-width="0.5"/></svg>
<div style="position:absolute;left:808.8px;top:123.2px;width:86px;height:0.6px;background:#c8c6c4;"></div>
<svg style="position:absolute;left:847.5px;top:120.6px;" width="8" height="3.4" viewBox="0 0 8 3.4" fill="none"><path d="M0.4 3 L4 0.5 L7.6 3" fill="#f3f2f1" stroke="#c8c6c4" stroke-width="0.6"/></svg>
<svg style="position:absolute;left:813px;top:128.2px;" width="78" height="12.9" viewBox="0 0 78 12.9" fill="none"><rect x="0.3" y="0.3" width="77.4" height="12.2" rx="0.8" fill="#ffffff" stroke="#8a8886" stroke-width="0.6"/></svg>
<svg style="position:absolute;left:816px;top:130.4px;" width="7" height="7" viewBox="0 0 7 7" fill="none"><circle cx="4.4" cy="2.8" r="2" stroke="#605e5c" stroke-width="0.6"/><path d="M3 4.2 L0.8 6.4" stroke="#605e5c" stroke-width="0.6"/></svg>
<span style="position:absolute;left:826.60px;top:131px;font-size:6.4px;line-height:7.68px;font-weight:400;color:#605e5c;white-space:pre;transform:scaleX(0.9286);transform-origin:0 0;">Search</span>
<span style="position:absolute;left:815.00px;top:150px;font-size:6.6px;line-height:7.92px;font-weight:400;color:#252423;white-space:pre;transform:scaleX(0.9778);transform-origin:0 0;">Visual</span>
<div style="position:absolute;left:815px;top:158.6px;width:17.8px;height:1.0px;background:#f0c419;"></div>
<span style="position:absolute;left:840.00px;top:150px;font-size:6.6px;line-height:7.92px;font-weight:400;color:#3b3a39;white-space:pre;transform:scaleX(0.9417);transform-origin:0 0;">General</span>
<div style="position:absolute;left:879.8px;top:152.6px;width:1.1px;height:1.1px;background:#a19f9d;border-radius:50%"></div>
<div style="position:absolute;left:882.6px;top:152.6px;width:1.1px;height:1.1px;background:#a19f9d;border-radius:50%"></div>
<div style="position:absolute;left:885.4px;top:152.6px;width:1.1px;height:1.1px;background:#a19f9d;border-radius:50%"></div>
<div style="position:absolute;left:808.8px;top:169.6px;width:86px;height:0.5px;background:#e6e4e2;"></div>
<svg style="position:absolute;left:813.3px;top:176.8px;" width="4.2" height="6.4" viewBox="0 0 4.2 6.4" fill="none"><path d="M0.7 0.5 L3.4 3.1 L0.7 5.7" stroke="#3b3a39" stroke-width="0.7"/></svg>
<span style="position:absolute;left:820.50px;top:176px;font-size:6.2px;line-height:7.44px;font-weight:400;color:#323130;white-space:pre;transform:scaleX(0.9151);transform-origin:0 0;-webkit-text-stroke:0.09px #323130;">Advanced Settings</span>
<div style="position:absolute;left:808.8px;top:189.03px;width:86px;height:0.5px;background:#e6e4e2;"></div>
<svg style="position:absolute;left:813.3px;top:196.23000000000002px;" width="4.2" height="6.4" viewBox="0 0 4.2 6.4" fill="none"><path d="M0.7 0.5 L3.4 3.1 L0.7 5.7" stroke="#3b3a39" stroke-width="0.7"/></svg>
<span style="position:absolute;left:820.50px;top:195px;font-size:6.2px;line-height:7.44px;font-weight:400;color:#323130;white-space:pre;transform:scaleX(0.9241);transform-origin:0 0;-webkit-text-stroke:0.09px #323130;">Use As Filter</span>
<svg style="position:absolute;left:875.2px;top:196.13000000000002px;" width="15.7" height="7.4" viewBox="0 0 15.7 7.4" fill="none"><rect x="0" y="0" width="15.7" height="7.4" rx="3.7" fill="#4d4b4a"/><circle cx="11.6" cy="3.7" r="1.95" fill="#ffffff"/></svg>
<span style="position:absolute;left:877.80px;top:198px;font-size:4.7px;line-height:5.64px;font-weight:700;color:#ffffff;white-space:pre;transform:scaleX(0.8571);transform-origin:0 0;">On</span>
<div style="position:absolute;left:808.8px;top:208.45999999999998px;width:86px;height:0.5px;background:#e6e4e2;"></div>
<svg style="position:absolute;left:813.3px;top:215.66px;" width="4.2" height="6.4" viewBox="0 0 4.2 6.4" fill="none"><path d="M0.7 0.5 L3.4 3.1 L0.7 5.7" stroke="#3b3a39" stroke-width="0.7"/></svg>
<span style="position:absolute;left:820.50px;top:215px;font-size:6.2px;line-height:7.44px;font-weight:400;color:#323130;white-space:pre;transform:scaleX(0.9221);transform-origin:0 0;-webkit-text-stroke:0.09px #323130;">Legend</span>
<svg style="position:absolute;left:875.2px;top:215.56px;" width="15.7" height="7.4" viewBox="0 0 15.7 7.4" fill="none"><rect x="0.25" y="0.25" width="15.2" height="6.9" rx="3.45" fill="#ffffff" stroke="#7f7d7b" stroke-width="0.6"/><circle cx="4.0" cy="3.7" r="1.8" fill="#4d4b4a"/></svg>
<span style="position:absolute;left:882.10px;top:217px;font-size:4.7px;line-height:5.64px;font-weight:400;color:#605e5c;white-space:pre;transform:scaleX(0.9143);transform-origin:0 0;">Off</span>
<div style="position:absolute;left:808.8px;top:227.89px;width:86px;height:0.5px;background:#e6e4e2;"></div>
<svg style="position:absolute;left:813.3px;top:235.09px;" width="4.2" height="6.4" viewBox="0 0 4.2 6.4" fill="none"><path d="M0.7 0.5 L3.4 3.1 L0.7 5.7" stroke="#3b3a39" stroke-width="0.7"/></svg>
<span style="position:absolute;left:820.50px;top:234px;font-size:6.2px;line-height:7.44px;font-weight:400;color:#323130;white-space:pre;transform:scaleX(0.8755);transform-origin:0 0;-webkit-text-stroke:0.09px #323130;">Data</span>
<div style="position:absolute;left:808.8px;top:247.32px;width:86px;height:0.5px;background:#e6e4e2;"></div>
<svg style="position:absolute;left:813.3px;top:254.52px;" width="4.2" height="6.4" viewBox="0 0 4.2 6.4" fill="none"><path d="M0.7 0.5 L3.4 3.1 L0.7 5.7" stroke="#3b3a39" stroke-width="0.7"/></svg>
<span style="position:absolute;left:820.50px;top:254px;font-size:6.2px;line-height:7.44px;font-weight:400;color:#323130;white-space:pre;transform:scaleX(0.9597);transform-origin:0 0;-webkit-text-stroke:0.09px #323130;">Primary Y-Axis</span>
<svg style="position:absolute;left:875.2px;top:254.42000000000002px;" width="15.7" height="7.4" viewBox="0 0 15.7 7.4" fill="none"><rect x="0" y="0" width="15.7" height="7.4" rx="3.7" fill="#4d4b4a"/><circle cx="11.6" cy="3.7" r="1.95" fill="#ffffff"/></svg>
<span style="position:absolute;left:877.80px;top:256px;font-size:4.7px;line-height:5.64px;font-weight:700;color:#ffffff;white-space:pre;transform:scaleX(0.8571);transform-origin:0 0;">On</span>
<div style="position:absolute;left:808.8px;top:266.75px;width:86px;height:0.5px;background:#e6e4e2;"></div>
<svg style="position:absolute;left:813.3px;top:273.95px;" width="4.2" height="6.4" viewBox="0 0 4.2 6.4" fill="none"><path d="M0.7 0.5 L3.4 3.1 L0.7 5.7" stroke="#3b3a39" stroke-width="0.7"/></svg>
<span style="position:absolute;left:820.50px;top:273px;font-size:6.2px;line-height:7.44px;font-weight:400;color:#323130;white-space:pre;transform:scaleX(0.9417);transform-origin:0 0;-webkit-text-stroke:0.09px #323130;">Secondary Y-Axis</span>
<svg style="position:absolute;left:875.2px;top:273.85px;" width="15.7" height="7.4" viewBox="0 0 15.7 7.4" fill="none"><rect x="0.25" y="0.25" width="15.2" height="6.9" rx="3.45" fill="#ffffff" stroke="#7f7d7b" stroke-width="0.6"/><circle cx="4.0" cy="3.7" r="1.8" fill="#4d4b4a"/></svg>
<span style="position:absolute;left:882.10px;top:276px;font-size:4.7px;line-height:5.64px;font-weight:400;color:#605e5c;white-space:pre;transform:scaleX(0.9143);transform-origin:0 0;">Off</span>
<div style="position:absolute;left:808.8px;top:286.18px;width:86px;height:0.5px;background:#e6e4e2;"></div>
<svg style="position:absolute;left:813.3px;top:293.38px;" width="4.2" height="6.4" viewBox="0 0 4.2 6.4" fill="none"><path d="M0.7 0.5 L3.4 3.1 L0.7 5.7" stroke="#3b3a39" stroke-width="0.7"/></svg>
<span style="position:absolute;left:820.50px;top:293px;font-size:6.2px;line-height:7.44px;font-weight:400;color:#323130;white-space:pre;transform:scaleX(0.9270);transform-origin:0 0;-webkit-text-stroke:0.09px #323130;">X-Axis</span>
<svg style="position:absolute;left:875.2px;top:293.28000000000003px;" width="15.7" height="7.4" viewBox="0 0 15.7 7.4" fill="none"><rect x="0" y="0" width="15.7" height="7.4" rx="3.7" fill="#4d4b4a"/><circle cx="11.6" cy="3.7" r="1.95" fill="#ffffff"/></svg>
<span style="position:absolute;left:877.80px;top:295px;font-size:4.7px;line-height:5.64px;font-weight:700;color:#ffffff;white-space:pre;transform:scaleX(0.8571);transform-origin:0 0;">On</span>
<div style="position:absolute;left:808.8px;top:305.61px;width:86px;height:0.5px;background:#e6e4e2;"></div>
<svg style="position:absolute;left:813.3px;top:312.80999999999995px;" width="4.2" height="6.4" viewBox="0 0 4.2 6.4" fill="none"><path d="M0.7 0.5 L3.4 3.1 L0.7 5.7" stroke="#3b3a39" stroke-width="0.7"/></svg>
<span style="position:absolute;left:820.50px;top:312px;font-size:6.2px;line-height:7.44px;font-weight:400;color:#323130;white-space:pre;transform:scaleX(0.9469);transform-origin:0 0;-webkit-text-stroke:0.09px #323130;">Thresholds</span>
<svg style="position:absolute;left:875.2px;top:312.71px;" width="15.7" height="7.4" viewBox="0 0 15.7 7.4" fill="none"><rect x="0.25" y="0.25" width="15.2" height="6.9" rx="3.45" fill="#ffffff" stroke="#7f7d7b" stroke-width="0.6"/><circle cx="4.0" cy="3.7" r="1.8" fill="#4d4b4a"/></svg>
<span style="position:absolute;left:882.10px;top:315px;font-size:4.7px;line-height:5.64px;font-weight:400;color:#605e5c;white-space:pre;transform:scaleX(0.9143);transform-origin:0 0;">Off</span>
<div style="position:absolute;left:808.8px;top:325.03999999999996px;width:86px;height:0.5px;background:#e6e4e2;"></div>
<svg style="position:absolute;left:813.3px;top:332.24px;" width="4.2" height="6.4" viewBox="0 0 4.2 6.4" fill="none"><path d="M0.7 0.5 L3.4 3.1 L0.7 5.7" stroke="#3b3a39" stroke-width="0.7"/></svg>
<span style="position:absolute;left:820.50px;top:331px;font-size:6.2px;line-height:7.44px;font-weight:400;color:#323130;white-space:pre;transform:scaleX(0.9193);transform-origin:0 0;-webkit-text-stroke:0.09px #323130;">Stack Settings</span>
<div style="position:absolute;left:808.8px;top:344.47px;width:86px;height:0.5px;background:#e6e4e2;"></div>
<svg style="position:absolute;left:813.3px;top:351.66999999999996px;" width="4.2" height="6.4" viewBox="0 0 4.2 6.4" fill="none"><path d="M0.7 0.5 L3.4 3.1 L0.7 5.7" stroke="#3b3a39" stroke-width="0.7"/></svg>
<span style="position:absolute;left:820.50px;top:351px;font-size:6.2px;line-height:7.44px;font-weight:400;color:#323130;white-space:pre;transform:scaleX(0.9673);transform-origin:0 0;-webkit-text-stroke:0.09px #323130;">Column Padding</span>
<div style="position:absolute;left:808.8px;top:363.9px;width:86px;height:0.5px;background:#e6e4e2;"></div>
<svg style="position:absolute;left:813.3px;top:371.1px;" width="4.2" height="6.4" viewBox="0 0 4.2 6.4" fill="none"><path d="M0.7 0.5 L3.4 3.1 L0.7 5.7" stroke="#3b3a39" stroke-width="0.7"/></svg>
<span style="position:absolute;left:820.50px;top:370px;font-size:6.2px;line-height:7.44px;font-weight:400;color:#323130;white-space:pre;transform:scaleX(0.9543);transform-origin:0 0;-webkit-text-stroke:0.09px #323130;">Fill Color Settings</span>
<div style="position:absolute;left:808.8px;top:383.33px;width:86px;height:0.5px;background:#e6e4e2;"></div>
<svg style="position:absolute;left:813.3px;top:390.53px;" width="4.2" height="6.4" viewBox="0 0 4.2 6.4" fill="none"><path d="M0.7 0.5 L3.4 3.1 L0.7 5.7" stroke="#3b3a39" stroke-width="0.7"/></svg>
<span style="position:absolute;left:820.50px;top:390px;font-size:6.2px;line-height:7.44px;font-weight:400;color:#323130;white-space:pre;transform:scaleX(0.9319);transform-origin:0 0;-webkit-text-stroke:0.09px #323130;">Toolbar</span>
<svg style="position:absolute;left:875.2px;top:390.43px;" width="15.7" height="7.4" viewBox="0 0 15.7 7.4" fill="none"><rect x="0" y="0" width="15.7" height="7.4" rx="3.7" fill="#4d4b4a"/><circle cx="11.6" cy="3.7" r="1.95" fill="#ffffff"/></svg>
<span style="position:absolute;left:877.80px;top:392px;font-size:4.7px;line-height:5.64px;font-weight:700;color:#ffffff;white-space:pre;transform:scaleX(0.8571);transform-origin:0 0;">On</span>
<div style="position:absolute;left:808.8px;top:402.76px;width:86px;height:0.5px;background:#e6e4e2;"></div>
<svg style="position:absolute;left:813.3px;top:409.96px;" width="4.2" height="6.4" viewBox="0 0 4.2 6.4" fill="none"><path d="M0.7 0.5 L3.4 3.1 L0.7 5.7" stroke="#3b3a39" stroke-width="0.7"/></svg>
<span style="position:absolute;left:820.50px;top:409px;font-size:6.2px;line-height:7.44px;font-weight:400;color:#323130;white-space:pre;transform:scaleX(0.9368);transform-origin:0 0;-webkit-text-stroke:0.09px #323130;">Tooltip Settings</span>
<svg style="position:absolute;left:875.2px;top:409.86px;" width="15.7" height="7.4" viewBox="0 0 15.7 7.4" fill="none"><rect x="0" y="0" width="15.7" height="7.4" rx="3.7" fill="#4d4b4a"/><circle cx="11.6" cy="3.7" r="1.95" fill="#ffffff"/></svg>
<span style="position:absolute;left:877.80px;top:411px;font-size:4.7px;line-height:5.64px;font-weight:700;color:#ffffff;white-space:pre;transform:scaleX(0.8571);transform-origin:0 0;">On</span>
<div style="position:absolute;left:808.8px;top:422.19px;width:86px;height:0.5px;background:#e6e4e2;"></div>
<svg style="position:absolute;left:813.3px;top:429.39px;" width="4.2" height="6.4" viewBox="0 0 4.2 6.4" fill="none"><path d="M0.7 0.5 L3.4 3.1 L0.7 5.7" stroke="#3b3a39" stroke-width="0.7"/></svg>
<span style="position:absolute;left:820.50px;top:429px;font-size:6.2px;line-height:7.44px;font-weight:400;color:#323130;white-space:pre;transform:scaleX(0.9319);transform-origin:0 0;-webkit-text-stroke:0.09px #323130;">Series Defaults</span>
<svg style="position:absolute;left:875.2px;top:429.29px;" width="15.7" height="7.4" viewBox="0 0 15.7 7.4" fill="none"><rect x="0.25" y="0.25" width="15.2" height="6.9" rx="3.45" fill="#ffffff" stroke="#7f7d7b" stroke-width="0.6"/><circle cx="4.0" cy="3.7" r="1.8" fill="#4d4b4a"/></svg>
<span style="position:absolute;left:882.10px;top:431px;font-size:4.7px;line-height:5.64px;font-weight:400;color:#605e5c;white-space:pre;transform:scaleX(0.9143);transform-origin:0 0;">Off</span>
<div style="position:absolute;left:808.8px;top:441.62px;width:86px;height:0.5px;background:#e6e4e2;"></div>
<svg style="position:absolute;left:813.3px;top:448.81999999999994px;" width="4.2" height="6.4" viewBox="0 0 4.2 6.4" fill="none"><path d="M0.7 0.5 L3.4 3.1 L0.7 5.7" stroke="#3b3a39" stroke-width="0.7"/></svg>
<span style="position:absolute;left:820.50px;top:448px;font-size:6.2px;line-height:7.44px;font-weight:400;color:#323130;white-space:pre;transform:scaleX(0.9173);transform-origin:0 0;-webkit-text-stroke:0.09px #323130;">Series 1 Configur...</span>
<svg style="position:absolute;left:875.2px;top:448.71999999999997px;" width="15.7" height="7.4" viewBox="0 0 15.7 7.4" fill="none"><rect x="0" y="0" width="15.7" height="7.4" rx="3.7" fill="#4d4b4a"/><circle cx="11.6" cy="3.7" r="1.95" fill="#ffffff"/></svg>
<span style="position:absolute;left:877.80px;top:450px;font-size:4.7px;line-height:5.64px;font-weight:700;color:#ffffff;white-space:pre;transform:scaleX(0.8571);transform-origin:0 0;">On</span>
<div style="position:absolute;left:808.8px;top:461.04999999999995px;width:86px;height:0.5px;background:#e6e4e2;"></div>
<svg style="position:absolute;left:813.3px;top:468.25px;" width="4.2" height="6.4" viewBox="0 0 4.2 6.4" fill="none"><path d="M0.7 0.5 L3.4 3.1 L0.7 5.7" stroke="#3b3a39" stroke-width="0.7"/></svg>
<span style="position:absolute;left:820.50px;top:467px;font-size:6.2px;line-height:7.44px;font-weight:400;color:#323130;white-space:pre;transform:scaleX(0.9367);transform-origin:0 0;-webkit-text-stroke:0.09px #323130;">Series 2 Configur...</span>
<svg style="position:absolute;left:875.2px;top:468.15000000000003px;" width="15.7" height="7.4" viewBox="0 0 15.7 7.4" fill="none"><rect x="0.25" y="0.25" width="15.2" height="6.9" rx="3.45" fill="#ffffff" stroke="#7f7d7b" stroke-width="0.6"/><circle cx="4.0" cy="3.7" r="1.8" fill="#4d4b4a"/></svg>
<span style="position:absolute;left:882.10px;top:470px;font-size:4.7px;line-height:5.64px;font-weight:400;color:#605e5c;white-space:pre;transform:scaleX(0.9143);transform-origin:0 0;">Off</span>
<div style="position:absolute;left:891.8px;top:199px;width:2.9px;height:279px;background:#cbc9c7;"></div>
<svg style="position:absolute;left:0px;top:0px;" width="910" height="502" viewBox="0 0 910 502" fill="none"><line x1="662.0" y1="221.8" x2="851.7" y2="448.0" stroke="#efc21a" stroke-width="1.9"/></svg>
<div style="position:absolute;left:809.7px;top:406.0px;width:84.0px;height:84.0px;border-radius:50%;box-shadow:0 2px 6px rgba(0,0,0,0.22);background:#f3f2f1;"></div>
<div style="position:absolute;left:809.7px;top:406.0px;width:84.0px;height:84.0px;border-radius:50%;overflow:hidden;"><div style="position:absolute;left:-809.7px;top:-406.0px;width:910px;height:502px;">
<div style="position:absolute;left:808.5px;top:380px;width:101.5px;height:100.5px;background:#f3f2f1;"></div>
<div style="position:absolute;left:808.3px;top:380px;width:0.7px;height:100.5px;background:#dddbd9;"></div>
<div style="position:absolute;left:894.6px;top:380px;width:0.7px;height:100.5px;background:#dddbd9;"></div>
<div style="position:absolute;left:780px;top:480.5px;width:130px;height:12.5px;background:#f1f0ef;"></div>
<div style="position:absolute;left:780px;top:480px;width:130px;height:0.8px;background:#dddcda;"></div>
<div style="position:absolute;left:780px;top:493px;width:130px;height:9px;background:#ffffff;"></div>
<div style="position:absolute;left:808.8px;top:383.33px;width:86px;height:0.5px;background:#e6e4e2;"></div>
<svg style="position:absolute;left:813.3px;top:390.53px;" width="4.2" height="6.4" viewBox="0 0 4.2 6.4" fill="none"><path d="M0.7 0.5 L3.4 3.1 L0.7 5.7" stroke="#3b3a39" stroke-width="0.7"/></svg>
<span style="position:absolute;left:820.50px;top:390px;font-size:6.2px;line-height:7.44px;font-weight:400;color:#323130;white-space:pre;transform:scaleX(0.9319);transform-origin:0 0;-webkit-text-stroke:0.09px #323130;">Toolbar</span>
<svg style="position:absolute;left:875.2px;top:390.43px;" width="15.7" height="7.4" viewBox="0 0 15.7 7.4" fill="none"><rect x="0" y="0" width="15.7" height="7.4" rx="3.7" fill="#4d4b4a"/><circle cx="11.6" cy="3.7" r="1.95" fill="#ffffff"/></svg>
<span style="position:absolute;left:877.80px;top:392px;font-size:4.7px;line-height:5.64px;font-weight:700;color:#ffffff;white-space:pre;transform:scaleX(0.8571);transform-origin:0 0;">On</span>
<div style="position:absolute;left:808.8px;top:402.76px;width:86px;height:0.5px;background:#e6e4e2;"></div>
<svg style="position:absolute;left:813.3px;top:409.96px;" width="4.2" height="6.4" viewBox="0 0 4.2 6.4" fill="none"><path d="M0.7 0.5 L3.4 3.1 L0.7 5.7" stroke="#3b3a39" stroke-width="0.7"/></svg>
<span style="position:absolute;left:820.50px;top:409px;font-size:6.2px;line-height:7.44px;font-weight:400;color:#323130;white-space:pre;transform:scaleX(0.9368);transform-origin:0 0;-webkit-text-stroke:0.09px #323130;">Tooltip Settings</span>
<svg style="position:absolute;left:875.2px;top:409.86px;" width="15.7" height="7.4" viewBox="0 0 15.7 7.4" fill="none"><rect x="0" y="0" width="15.7" height="7.4" rx="3.7" fill="#4d4b4a"/><circle cx="11.6" cy="3.7" r="1.95" fill="#ffffff"/></svg>
<span style="position:absolute;left:877.80px;top:411px;font-size:4.7px;line-height:5.64px;font-weight:700;color:#ffffff;white-space:pre;transform:scaleX(0.8571);transform-origin:0 0;">On</span>
<div style="position:absolute;left:808.8px;top:422.19px;width:86px;height:0.5px;background:#e6e4e2;"></div>
<svg style="position:absolute;left:813.3px;top:429.39px;" width="4.2" height="6.4" viewBox="0 0 4.2 6.4" fill="none"><path d="M0.7 0.5 L3.4 3.1 L0.7 5.7" stroke="#3b3a39" stroke-width="0.7"/></svg>
<span style="position:absolute;left:820.50px;top:429px;font-size:6.2px;line-height:7.44px;font-weight:400;color:#323130;white-space:pre;transform:scaleX(0.9319);transform-origin:0 0;-webkit-text-stroke:0.09px #323130;">Series Defaults</span>
<svg style="position:absolute;left:875.2px;top:429.29px;" width="15.7" height="7.4" viewBox="0 0 15.7 7.4" fill="none"><rect x="0.25" y="0.25" width="15.2" height="6.9" rx="3.45" fill="#ffffff" stroke="#7f7d7b" stroke-width="0.6"/><circle cx="4.0" cy="3.7" r="1.8" fill="#4d4b4a"/></svg>
<span style="position:absolute;left:882.10px;top:431px;font-size:4.7px;line-height:5.64px;font-weight:400;color:#605e5c;white-space:pre;transform:scaleX(0.9143);transform-origin:0 0;">Off</span>
<div style="position:absolute;left:808.8px;top:441.62px;width:86px;height:0.5px;background:#e6e4e2;"></div>
<svg style="position:absolute;left:813.3px;top:448.81999999999994px;" width="4.2" height="6.4" viewBox="0 0 4.2 6.4" fill="none"><path d="M0.7 0.5 L3.4 3.1 L0.7 5.7" stroke="#3b3a39" stroke-width="0.7"/></svg>
<span style="position:absolute;left:820.50px;top:448px;font-size:6.2px;line-height:7.44px;font-weight:400;color:#323130;white-space:pre;transform:scaleX(0.9173);transform-origin:0 0;-webkit-text-stroke:0.09px #323130;">Series 1 Configur...</span>
<svg style="position:absolute;left:875.2px;top:448.71999999999997px;" width="15.7" height="7.4" viewBox="0 0 15.7 7.4" fill="none"><rect x="0" y="0" width="15.7" height="7.4" rx="3.7" fill="#4d4b4a"/><circle cx="11.6" cy="3.7" r="1.95" fill="#ffffff"/></svg>
<span style="position:absolute;left:877.80px;top:450px;font-size:4.7px;line-height:5.64px;font-weight:700;color:#ffffff;white-space:pre;transform:scaleX(0.8571);transform-origin:0 0;">On</span>
<div style="position:absolute;left:808.8px;top:461.04999999999995px;width:86px;height:0.5px;background:#e6e4e2;"></div>
<svg style="position:absolute;left:813.3px;top:468.25px;" width="4.2" height="6.4" viewBox="0 0 4.2 6.4" fill="none"><path d="M0.7 0.5 L3.4 3.1 L0.7 5.7" stroke="#3b3a39" stroke-width="0.7"/></svg>
<span style="position:absolute;left:820.50px;top:467px;font-size:6.2px;line-height:7.44px;font-weight:400;color:#323130;white-space:pre;transform:scaleX(0.9367);transform-origin:0 0;-webkit-text-stroke:0.09px #323130;">Series 2 Configur...</span>
<svg style="position:absolute;left:875.2px;top:468.15000000000003px;" width="15.7" height="7.4" viewBox="0 0 15.7 7.4" fill="none"><rect x="0.25" y="0.25" width="15.2" height="6.9" rx="3.45" fill="#ffffff" stroke="#7f7d7b" stroke-width="0.6"/><circle cx="4.0" cy="3.7" r="1.8" fill="#4d4b4a"/></svg>
<span style="position:absolute;left:882.10px;top:470px;font-size:4.7px;line-height:5.64px;font-weight:400;color:#605e5c;white-space:pre;transform:scaleX(0.9143);transform-origin:0 0;">Off</span>
<div style="position:absolute;left:891.8px;top:380px;width:2.9px;height:98px;background:#cbc9c7;"></div>
<div style="position:absolute;left:804.8px;top:486.3px;width:1.8px;height:0.6px;background:#605e5c;"></div>
<div style="position:absolute;left:809px;top:486.3px;width:48px;height:0.45px;background:#8a8886;"></div>
<div style="position:absolute;left:832.3px;top:483.8px;width:1.4px;height:5.4px;background:#3b3a39;"></div>
<svg style="position:absolute;left:859.5px;top:484.1px;" width="4.5" height="4.5" viewBox="0 0 4.5 4.5" fill="none"><path d="M2.2 0.4 V4 M0.4 2.2 H4" stroke="#605e5c" stroke-width="0.6"/></svg>
<span style="position:absolute;left:870.20px;top:484px;font-size:5.9px;line-height:7.08px;font-weight:400;color:#4a4846;white-space:pre;transform:scaleX(0.8933);transform-origin:0 0;">100%</span>
</div></div>
<svg style="position:absolute;left:0px;top:0px;" width="910" height="502" viewBox="0 0 910 502" fill="none"><circle cx="851.7" cy="448.0" r="41.0" stroke="#efc21a" stroke-width="2.2"/></svg>
<div style="position:absolute;left:564.8px;top:124.60000000000001px;width:194.4px;height:194.4px;border-radius:50%;box-shadow:0 3px 10px 1px rgba(0,0,0,0.32);background:#f3f2f1;"></div>
<div style="position:absolute;left:564.8px;top:124.60000000000001px;width:194.4px;height:194.4px;border-radius:50%;overflow:hidden;"><div class="mag" style="position:absolute;left:0;top:0;width:910px;height:502px;transform-origin:0 0;transform:translate(97.2px,97.2px) scale(2.3380) translate(-851.1px,-447.8px);">
<div style="position:absolute;left:808.5px;top:380px;width:101.5px;height:100.5px;background:#f3f2f1;"></div>
<div style="position:absolute;left:808.3px;top:380px;width:0.7px;height:100.5px;background:#dddbd9;"></div>
<div style="position:absolute;left:894.6px;top:380px;width:0.7px;height:100.5px;background:#dddbd9;"></div>
<div style="position:absolute;left:780px;top:480.5px;width:130px;height:12.5px;background:#f1f0ef;"></div>
<div style="position:absolute;left:780px;top:480px;width:130px;height:0.8px;background:#dddcda;"></div>
<div style="position:absolute;left:780px;top:493px;width:130px;height:9px;background:#ffffff;"></div>
<div style="position:absolute;left:808.8px;top:383.33px;width:86px;height:0.5px;background:#e6e4e2;"></div>
<svg style="position:absolute;left:813.3px;top:390.53px;" width="4.2" height="6.4" viewBox="0 0 4.2 6.4" fill="none"><path d="M0.7 0.5 L3.4 3.1 L0.7 5.7" stroke="#3b3a39" stroke-width="0.7"/></svg>
<span style="position:absolute;left:820.50px;top:390px;font-size:6.2px;line-height:7.44px;font-weight:400;color:#323130;white-space:pre;transform:scaleX(0.9319);transform-origin:0 0;-webkit-text-stroke:0.09px #323130;">Toolbar</span>
<svg style="position:absolute;left:875.2px;top:390.43px;" width="15.7" height="7.4" viewBox="0 0 15.7 7.4" fill="none"><rect x="0" y="0" width="15.7" height="7.4" rx="3.7" fill="#4d4b4a"/><circle cx="11.6" cy="3.7" r="1.95" fill="#ffffff"/></svg>
<span style="position:absolute;left:877.80px;top:392px;font-size:4.7px;line-height:5.64px;font-weight:700;color:#ffffff;white-space:pre;transform:scaleX(0.8571);transform-origin:0 0;">On</span>
<div style="position:absolute;left:808.8px;top:402.76px;width:86px;height:0.5px;background:#e6e4e2;"></div>
<svg style="position:absolute;left:813.3px;top:409.96px;" width="4.2" height="6.4" viewBox="0 0 4.2 6.4" fill="none"><path d="M0.7 0.5 L3.4 3.1 L0.7 5.7" stroke="#3b3a39" stroke-width="0.7"/></svg>
<span style="position:absolute;left:820.50px;top:409px;font-size:6.2px;line-height:7.44px;font-weight:400;color:#323130;white-space:pre;transform:scaleX(0.9368);transform-origin:0 0;-webkit-text-stroke:0.09px #323130;">Tooltip Settings</span>
<svg style="position:absolute;left:875.2px;top:409.86px;" width="15.7" height="7.4" viewBox="0 0 15.7 7.4" fill="none"><rect x="0" y="0" width="15.7" height="7.4" rx="3.7" fill="#4d4b4a"/><circle cx="11.6" cy="3.7" r="1.95" fill="#ffffff"/></svg>
<span style="position:absolute;left:877.80px;top:411px;font-size:4.7px;line-height:5.64px;font-weight:700;color:#ffffff;white-space:pre;transform:scaleX(0.8571);transform-origin:0 0;">On</span>
<div style="position:absolute;left:808.8px;top:422.19px;width:86px;height:0.5px;background:#e6e4e2;"></div>
<svg style="position:absolute;left:813.3px;top:429.39px;" width="4.2" height="6.4" viewBox="0 0 4.2 6.4" fill="none"><path d="M0.7 0.5 L3.4 3.1 L0.7 5.7" stroke="#3b3a39" stroke-width="0.7"/></svg>
<span style="position:absolute;left:820.50px;top:429px;font-size:6.2px;line-height:7.44px;font-weight:400;color:#323130;white-space:pre;transform:scaleX(0.9319);transform-origin:0 0;-webkit-text-stroke:0.09px #323130;">Series Defaults</span>
<svg style="position:absolute;left:875.2px;top:429.29px;" width="15.7" height="7.4" viewBox="0 0 15.7 7.4" fill="none"><rect x="0.25" y="0.25" width="15.2" height="6.9" rx="3.45" fill="#ffffff" stroke="#7f7d7b" stroke-width="0.6"/><circle cx="4.0" cy="3.7" r="1.8" fill="#4d4b4a"/></svg>
<span style="position:absolute;left:882.10px;top:431px;font-size:4.7px;line-height:5.64px;font-weight:400;color:#605e5c;white-space:pre;transform:scaleX(0.9143);transform-origin:0 0;">Off</span>
<div style="position:absolute;left:808.8px;top:441.62px;width:86px;height:0.5px;background:#e6e4e2;"></div>
<svg style="position:absolute;left:813.3px;top:448.81999999999994px;" width="4.2" height="6.4" viewBox="0 0 4.2 6.4" fill="none"><path d="M0.7 0.5 L3.4 3.1 L0.7 5.7" stroke="#3b3a39" stroke-width="0.7"/></svg>
<span style="position:absolute;left:820.50px;top:448px;font-size:6.2px;line-height:7.44px;font-weight:400;color:#323130;white-space:pre;transform:scaleX(0.9173);transform-origin:0 0;-webkit-text-stroke:0.09px #323130;">Series 1 Configur...</span>
<svg style="position:absolute;left:875.2px;top:448.71999999999997px;" width="15.7" height="7.4" viewBox="0 0 15.7 7.4" fill="none"><rect x="0" y="0" width="15.7" height="7.4" rx="3.7" fill="#4d4b4a"/><circle cx="11.6" cy="3.7" r="1.95" fill="#ffffff"/></svg>
<span style="position:absolute;left:877.80px;top:450px;font-size:4.7px;line-height:5.64px;font-weight:700;color:#ffffff;white-space:pre;transform:scaleX(0.8571);transform-origin:0 0;">On</span>
<div style="position:absolute;left:808.8px;top:461.04999999999995px;width:86px;height:0.5px;background:#e6e4e2;"></div>
<svg style="position:absolute;left:813.3px;top:468.25px;" width="4.2" height="6.4" viewBox="0 0 4.2 6.4" fill="none"><path d="M0.7 0.5 L3.4 3.1 L0.7 5.7" stroke="#3b3a39" stroke-width="0.7"/></svg>
<span style="position:absolute;left:820.50px;top:467px;font-size:6.2px;line-height:7.44px;font-weight:400;color:#323130;white-space:pre;transform:scaleX(0.9367);transform-origin:0 0;-webkit-text-stroke:0.09px #323130;">Series 2 Configur...</span>
<svg style="position:absolute;left:875.2px;top:468.15000000000003px;" width="15.7" height="7.4" viewBox="0 0 15.7 7.4" fill="none"><rect x="0.25" y="0.25" width="15.2" height="6.9" rx="3.45" fill="#ffffff" stroke="#7f7d7b" stroke-width="0.6"/><circle cx="4.0" cy="3.7" r="1.8" fill="#4d4b4a"/></svg>
<span style="position:absolute;left:882.10px;top:470px;font-size:4.7px;line-height:5.64px;font-weight:400;color:#605e5c;white-space:pre;transform:scaleX(0.9143);transform-origin:0 0;">Off</span>
<div style="position:absolute;left:891.8px;top:380px;width:2.9px;height:98px;background:#cbc9c7;"></div>
<div style="position:absolute;left:804.8px;top:486.3px;width:1.8px;height:0.6px;background:#605e5c;"></div>
<div style="position:absolute;left:809px;top:486.3px;width:48px;height:0.45px;background:#8a8886;"></div>
<div style="position:absolute;left:832.3px;top:483.8px;width:1.4px;height:5.4px;background:#3b3a39;"></div>
<svg style="position:absolute;left:859.5px;top:484.1px;" width="4.5" height="4.5" viewBox="0 0 4.5 4.5" fill="none"><path d="M2.2 0.4 V4 M0.4 2.2 H4" stroke="#605e5c" stroke-width="0.6"/></svg>
<span style="position:absolute;left:870.20px;top:484px;font-size:5.9px;line-height:7.08px;font-weight:400;color:#4a4846;white-space:pre;transform:scaleX(0.8933);transform-origin:0 0;">100%</span>
<div style="position:absolute;left:819.4px;top:447.12px;width:52.4px;height:9px;background:rgba(242,200,17,0.34);"></div>
</div></div>
<svg style="position:absolute;left:0px;top:0px;" width="910" height="502" viewBox="0 0 910 502" fill="none"><circle cx="662.0" cy="221.8" r="96.0" stroke="#efc21a" stroke-width="2.5"/></svg>
</div></body></html>
